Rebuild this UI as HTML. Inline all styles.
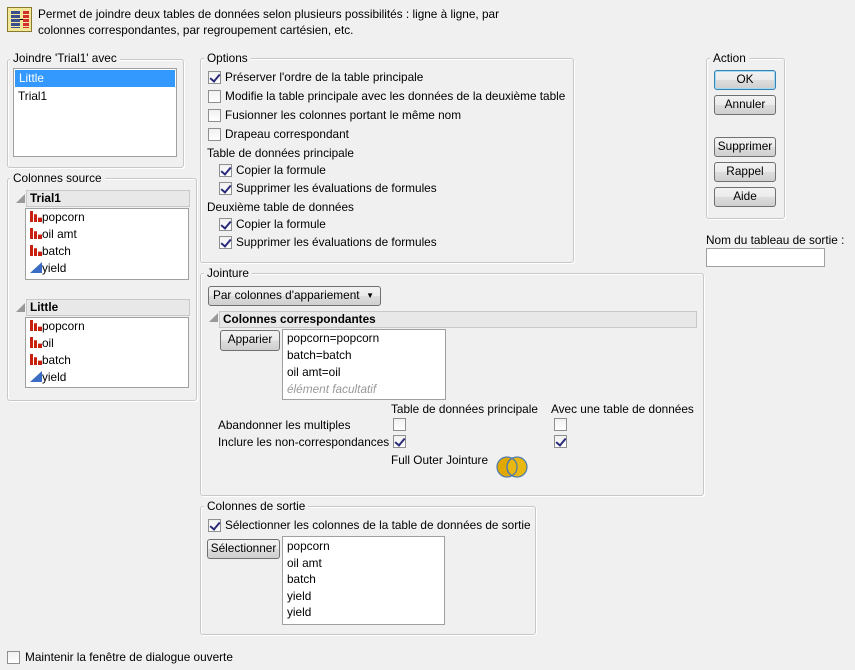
<!DOCTYPE html><html><head><meta charset="utf-8"><style>
*{box-sizing:border-box}
body{margin:0;width:855px;height:670px;background:#f0f0f0;font:11.8px "Liberation Sans",sans-serif;color:#000;position:relative;overflow:hidden}
.a{position:absolute;white-space:nowrap}
.grp{position:absolute;border:1px solid #c5c9cc;border-radius:3px;box-shadow:inset 1px 1px 0 #fff,1px 1px 0 #fff}
.lg{position:absolute;background:#f0f0f0;padding:0 3px;line-height:14px}
.list{position:absolute;background:#fff;border:1px solid #a0a0a0}
.list div{height:17px;line-height:17px;padding-left:4px}
.cb{position:absolute;width:13px;height:13px;border:1px solid #8e8f8f;background:linear-gradient(#f0f0f0,#fff)}
.cb.on::after{content:"";position:absolute;left:3px;top:0px;width:4px;height:8px;border:solid #2b2b7a;border-width:0 2px 2px 0;transform:rotate(40deg)}
.btn{position:absolute;border:1px solid #707070;border-radius:3px;background:linear-gradient(#f2f2f2,#ebebeb 50%,#dddddd 51%,#cfcfcf);text-align:center;line-height:17px}
.hdr{position:absolute;background:#e8e8e8;border:1px solid #c8c8c8;font-weight:bold;line-height:14px;padding-left:3px}
.tri{position:absolute;width:0;height:0;border-left:9px solid transparent;border-bottom:9px solid #999}
.bar{display:inline-block;width:12px;height:11px;vertical-align:-1px;background:linear-gradient(90deg,#c8200e 0 3px,transparent 3px 4px,#c8200e 4px 7px,transparent 7px 8px,#c8200e 8px 12px);clip-path:polygon(0 0,3px 0,3px 30%,7px 30%,7px 60%,12px 60%,12px 100%,0 100%)}
.cont{display:inline-block;width:12px;height:11px;vertical-align:-1px;background:#3a6cc4;clip-path:polygon(0 100%,100% 0,100% 100%)}
</style></head><body>
<div class="a" style="left:7px;top:7px;width:25px;height:25px;border:1px solid #8a7a30;background:#f3e89a">
<div style="position:absolute;left:3px;top:3px;width:9px;height:17px;background:repeating-linear-gradient(#3b4f8f 0 3px,#f3e89a 3px 4px)"></div>
<div style="position:absolute;left:12px;top:11px;width:3px;height:1px;background:#000"></div>
<div style="position:absolute;left:15px;top:3px;width:6px;height:17px;background:repeating-linear-gradient(#d23030 0 3px,#f3e89a 3px 4px)"></div></div>
<div class="a" style="left:38px;top:6px;line-height:16px">Permet de joindre deux tables de données selon plusieurs possibilités : ligne à ligne, par<br>colonnes correspondantes, par regroupement cartésien, etc.</div>

<div class="grp" style="left:7px;top:59px;width:177px;height:109px"></div>
<div class="lg" style="left:10px;top:51px">Joindre 'Trial1' avec</div>
<div class="list" style="left:13px;top:68px;width:164px;height:89px"><div style="background:#3399ff;color:#fff;margin:1px">Little</div><div>Trial1</div></div>

<div class="grp" style="left:7px;top:178px;width:190px;height:223px"></div>
<div class="lg" style="left:10px;top:171px">Colonnes source</div>
<div class="tri" style="left:16px;top:194px"></div>
<div class="hdr" style="left:26px;top:190px;width:164px;height:17px">Trial1</div>
<div class="list" style="left:25px;top:208px;width:164px;height:72px"><div><span class="bar"></span>popcorn</div><div><span class="bar"></span>oil amt</div><div><span class="bar"></span>batch</div><div><span class="cont"></span>yield</div></div>
<div class="tri" style="left:16px;top:303px"></div>
<div class="hdr" style="left:26px;top:299px;width:164px;height:17px">Little</div>
<div class="list" style="left:25px;top:317px;width:164px;height:71px"><div><span class="bar"></span>popcorn</div><div><span class="bar"></span>oil</div><div><span class="bar"></span>batch</div><div><span class="cont"></span>yield</div></div>

<div class="grp" style="left:200px;top:58px;width:374px;height:205px"></div>
<div class="lg" style="left:204px;top:51px">Options</div>
<div class="cb on" style="left:208px;top:71px"></div><div class="a" style="left:225px;top:70px">Préserver l'ordre de la table principale</div>
<div class="cb" style="left:208px;top:90px"></div><div class="a" style="left:225px;top:89px">Modifie la table principale avec les données de la deuxième table</div>
<div class="cb" style="left:208px;top:109px"></div><div class="a" style="left:225px;top:108px">Fusionner les colonnes portant le même nom</div>
<div class="cb" style="left:208px;top:128px"></div><div class="a" style="left:225px;top:127px">Drapeau correspondant</div>
<div class="a" style="left:207px;top:146px">Table de données principale</div>
<div class="cb on" style="left:219px;top:164px"></div><div class="a" style="left:236px;top:163px">Copier la formule</div>
<div class="cb on" style="left:219px;top:182px"></div><div class="a" style="left:236px;top:181px">Supprimer les évaluations de formules</div>
<div class="a" style="left:207px;top:200px">Deuxième table de données</div>
<div class="cb on" style="left:219px;top:218px"></div><div class="a" style="left:236px;top:217px">Copier la formule</div>
<div class="cb on" style="left:219px;top:236px"></div><div class="a" style="left:236px;top:235px">Supprimer les évaluations de formules</div>

<div class="grp" style="left:706px;top:58px;width:79px;height:161px"></div>
<div class="lg" style="left:710px;top:51px">Action</div>
<div class="btn" style="left:714px;top:70px;width:62px;height:20px;border-color:#3c7fb1;box-shadow:inset 0 0 0 1px #9cdcf5">OK</div>
<div class="btn" style="left:714px;top:95px;width:62px;height:20px">Annuler</div>
<div class="btn" style="left:714px;top:137px;width:62px;height:20px">Supprimer</div>
<div class="btn" style="left:714px;top:162px;width:62px;height:20px">Rappel</div>
<div class="btn" style="left:714px;top:187px;width:62px;height:20px">Aide</div>
<div class="a" style="left:706px;top:233px">Nom du tableau de sortie :</div>
<div class="a" style="left:706px;top:248px;width:119px;height:19px;background:#fff;border:1px solid #a0a0a0"></div>

<div class="grp" style="left:200px;top:273px;width:504px;height:223px"></div>
<div class="lg" style="left:204px;top:266px">Jointure</div>
<div class="btn" style="left:208px;top:286px;width:173px;height:20px;text-align:left;padding-left:4px">Par colonnes d'appariement <span style="font-size:8px;position:absolute;right:6px">▼</span></div>
<div class="tri" style="left:209px;top:313px"></div>
<div class="hdr" style="left:219px;top:311px;width:478px;height:17px">Colonnes correspondantes</div>
<div class="btn" style="left:220px;top:330px;width:60px;height:21px">Apparier</div>
<div class="list" style="left:282px;top:329px;width:164px;height:71px"><div>popcorn=popcorn</div><div>batch=batch</div><div>oil amt=oil</div><div style="color:#999;font-style:italic">élément facultatif</div></div>
<div class="a" style="left:391px;top:402px">Table de données principale</div>
<div class="a" style="left:551px;top:402px">Avec une table de données</div>
<div class="a" style="left:218px;top:418px">Abandonner les multiples</div>
<div class="cb" style="left:393px;top:418px"></div><div class="cb" style="left:554px;top:418px"></div>
<div class="a" style="left:218px;top:435px">Inclure les non-correspondances</div>
<div class="cb on" style="left:393px;top:435px"></div><div class="cb on" style="left:554px;top:435px"></div>
<div class="a" style="left:391px;top:453px">Full Outer Jointure</div>
<svg class="a" style="left:495px;top:455px" width="34" height="24"><circle cx="12" cy="12" r="10" fill="#e0a800" stroke="#4a78b0" stroke-width="1.2"/><circle cx="22" cy="12" r="10" fill="#e8b810" stroke="#4a78b0" stroke-width="1.2"/><path d="M17 3.3A10 10 0 0 1 17 20.7A10 10 0 0 1 17 3.3Z" fill="none" stroke="#4a78b0" stroke-width="1.2"/></svg>

<div class="grp" style="left:200px;top:506px;width:336px;height:129px"></div>
<div class="lg" style="left:204px;top:499px">Colonnes de sortie</div>
<div class="cb on" style="left:208px;top:519px"></div><div class="a" style="left:225px;top:518px">Sélectionner les colonnes de la table de données de sortie</div>
<div class="btn" style="left:207px;top:539px;width:73px;height:20px">Sélectionner</div>
<div class="list" style="left:282px;top:536px;width:163px;height:89px;padding-top:1px"><div style="height:16.5px">popcorn</div><div style="height:16.5px">oil amt</div><div style="height:16.5px">batch</div><div style="height:16.5px">yield</div><div style="height:16.5px">yield</div></div>

<div class="cb" style="left:7px;top:651px"></div><div class="a" style="left:25px;top:650px">Maintenir la fenêtre de dialogue ouverte</div>
</body></html>
